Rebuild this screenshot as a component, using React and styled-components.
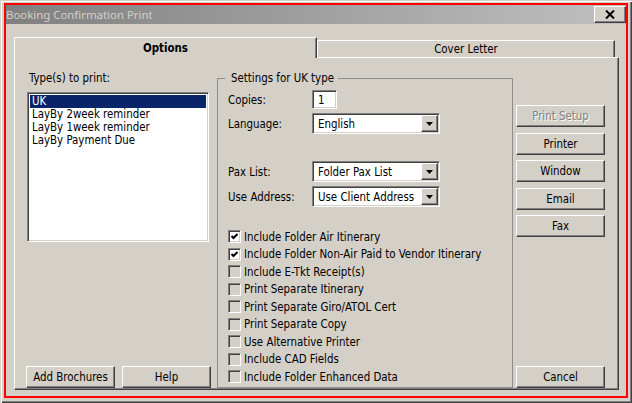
import React from 'react';
import styled, { createGlobalStyle } from 'styled-components';

const Global = createGlobalStyle`
  html, body { margin: 0; padding: 0; background: #d4d0c8; }
  body {
    font-family: "DejaVu Sans Condensed", "Liberation Sans", sans-serif;
    font-size: 11.4px;
    color: #000;
  }
  * { box-sizing: border-box; }
`;

const Window = styled.div`
  width: 632px;
  height: 403px;
  padding: 3px 4px 5px 4px;
  background: #d4d0c8;
  box-shadow: inset 1px 1px #d4d0c8, inset 2px 2px #fff, inset -1px -1px #404040, inset -2px -2px #808080;
`;

const Frame = styled.div`
  height: 100%;
  border: 2px solid #ff0000;
  display: flex;
  flex-direction: column;
`;

const TitleBar = styled.div`
  height: 19px;
  flex: none;
  display: flex;
  justify-content: space-between;
  align-items: flex-start;
  background: linear-gradient(to right, #808080, #c0c0c0);
`;

const Title = styled.span`
  font-family: "Noto Sans", "Liberation Sans", sans-serif;
  font-size: 11.4px;
  line-height: 19px;
  color: #d4d0c8;
`;

const RaisedButton = styled.button`
  font-family: inherit;
  font-size: 11.4px;
  padding: 0;
  margin: 0;
  background: #d4d0c8;
  color: ${p => (p.disabled ? '#808080' : '#000')};
  text-shadow: ${p => (p.disabled ? '1px 1px #fff' : 'none')};
  border-top: 1px solid #fff;
  border-left: 1px solid #fff;
  border-right: 1px solid #404040;
  border-bottom: 1px solid #404040;
  box-shadow: inset -1px -1px #808080;
  display: flex;
  align-items: center;
  justify-content: center;
`;

const CloseButton = styled(RaisedButton)`
  width: 32px;
  height: 17px;
  margin-top: 1px;
`;

const Body = styled.div`
  flex: 1;
  display: flex;
  flex-direction: column;
  padding: 13px 7px 6px 8px;
`;

const TabRow = styled.div`
  display: flex;
  align-items: flex-end;
  height: 20px;
  flex: none;
`;

const Tab = styled.div`
  position: relative;
  z-index: 1;
  width: ${p => (p.active ? '303px' : '298px')};
  height: ${p => (p.active ? '21px' : '17px')};
  margin-bottom: ${p => (p.active ? '-1px' : '0')};
  background: #d4d0c8;
  border-top: 1px solid #fff;
  border-left: 1px solid #fff;
  border-right: 1px solid #404040;
  box-shadow: inset -1px 0 #808080;
  font-weight: ${p => (p.active ? 'bold' : 'normal')};
  display: flex;
  justify-content: center;
  align-items: center;
`;

const Panel = styled.div`
  flex: 1;
  display: flex;
  padding: 14px 0 1px 11px;
  border-top: 1px solid #fff;
  border-left: 1px solid #fff;
  border-right: 1px solid #404040;
  border-bottom: 1px solid #404040;
  box-shadow: inset -1px -1px #808080;
`;

const LeftCol = styled.div`
  width: 185px;
  display: flex;
  flex-direction: column;
`;

const Caption = styled.div`
  line-height: 13px;
  padding-left: 3px;
`;

const sunken = `
  border-top: 1px solid #808080;
  border-left: 1px solid #808080;
  border-right: 1px solid #fff;
  border-bottom: 1px solid #fff;
  box-shadow: inset 1px 1px #404040, inset -1px -1px #d4d0c8;
`;

const ListBox = styled.div`
  ${sunken}
  width: 182px;
  height: 150px;
  margin: 7px 0 0 1px;
  background: #fff;
  padding: 2px;
`;

const ListItem = styled.div`
  height: 13px;
  line-height: 13px;
  padding-left: 2px;
  background: ${p => (p.selected ? '#0a246a' : 'transparent')};
  color: ${p => (p.selected ? '#fff' : '#000')};
  white-space: nowrap;
`;

const ButtonRow = styled.div`
  margin-top: auto;
  display: flex;
  gap: 7px;
`;

const DialogButton = styled(RaisedButton)`
  width: 89px;
  height: 22px;
  flex: none;
`;

const Group = styled.fieldset`
  width: 296px;
  margin: 0 0 0 6px;
  padding: 5px 0 0 10px;
  border: 1px solid #8c8c8c;
  min-width: 0;
`;

const Legend = styled.legend`
  margin-left: -3px;
  padding: 0 4px 0 6px;
  line-height: 13px;
`;

const FieldRow = styled.div`
  display: flex;
  align-items: center;
  margin-top: ${p => p.gap || 0}px;
`;

const FieldLabel = styled.div`
  width: 84px;
  flex: none;
`;

const TextBox = styled.div`
  ${sunken}
  width: 25px;
  height: 19px;
  background: #fff;
  padding-left: 5px;
  display: flex;
  align-items: center;
`;

const Combo = styled.div`
  ${sunken}
  width: 128px;
  height: 21px;
  background: #fff;
  display: flex;
  align-items: center;
  padding: 1px 1px 1px 5px;
`;

const ComboText = styled.span`
  flex: 1;
  white-space: nowrap;
`;

const ComboArrow = styled(RaisedButton)`
  width: 17px;
  height: 17px;
  flex: none;
`;

const CheckList = styled.div`
  margin-top: 21px;
  display: flex;
  flex-direction: column;
`;

const CheckRow = styled.div`
  height: 17.5px;
  display: flex;
  align-items: center;
  white-space: nowrap;
`;

const CheckBox = styled.span`
  ${sunken}
  width: 13px;
  height: 13px;
  flex: none;
  margin-right: 3px;
  background: ${p => (p.checked ? '#fff' : '#d4d0c8')};
  display: flex;
  align-items: center;
  justify-content: center;
`;

const RightCol = styled.div`
  width: 89px;
  margin-left: 3px;
  padding-top: 33px;
  display: flex;
  flex-direction: column;
  gap: 5.5px;
`;

const CancelSlot = styled.div`
  margin-top: auto;
`;

const Arrow = () => (
  <svg width="7" height="4" viewBox="0 0 7 4">
    <polygon points="0,0 7,0 3.5,4" fill="#000" />
  </svg>
);

const CloseIcon = () => (
  <svg width="10" height="9" viewBox="0 0 10 9">
    <path d="M1 0.5 L9 8.5 M9 0.5 L1 8.5" stroke="#000" strokeWidth="2" />
  </svg>
);

const CheckMark = () => (
  <svg width="9" height="9" viewBox="0 0 9 9">
    <polyline points="1.5,4 3.5,6 7.5,2" fill="none" stroke="#000" strokeWidth="2" />
  </svg>
);

const types = ['UK', 'LayBy 2week reminder', 'LayBy 1week reminder', 'LayBy Payment Due'];

const options = [
  ['Include Folder Air Itinerary', true],
  ['Include Folder Non-Air Paid to Vendor Itinerary', true],
  ['Include E-Tkt Receipt(s)', false],
  ['Print Separate Itinerary', false],
  ['Print Separate Giro/ATOL Cert', false],
  ['Print Separate Copy', false],
  ['Use Alternative Printer', false],
  ['Include CAD Fields', false],
  ['Include Folder Enhanced Data', false],
];

const Select = ({ value }) => (
  <Combo>
    <ComboText>{value}</ComboText>
    <ComboArrow as="span"><Arrow /></ComboArrow>
  </Combo>
);

export default function App() {
  return (
    <>
      <Global />
      <Window>
        <Frame>
          <TitleBar>
            <Title>Booking Confirmation Print</Title>
            <CloseButton><CloseIcon /></CloseButton>
          </TitleBar>
          <Body>
            <TabRow>
              <Tab active>Options</Tab>
              <Tab>Cover Letter</Tab>
            </TabRow>
            <Panel>
              <LeftCol>
                <Caption>Type(s) to print:</Caption>
                <ListBox>
                  {types.map((t, i) => (
                    <ListItem key={t} selected={i === 0}>{t}</ListItem>
                  ))}
                </ListBox>
                <ButtonRow>
                  <DialogButton>Add Brochures</DialogButton>
                  <DialogButton>Help</DialogButton>
                </ButtonRow>
              </LeftCol>
              <Group>
                <Legend>Settings for UK type</Legend>
                <FieldRow>
                  <FieldLabel>Copies:</FieldLabel>
                  <TextBox>1</TextBox>
                </FieldRow>
                <FieldRow gap={4}>
                  <FieldLabel>Language:</FieldLabel>
                  <Select value="English" />
                </FieldRow>
                <FieldRow gap={27}>
                  <FieldLabel>Pax List:</FieldLabel>
                  <Select value="Folder Pax List" />
                </FieldRow>
                <FieldRow gap={4}>
                  <FieldLabel>Use Address:</FieldLabel>
                  <Select value="Use Client Address" />
                </FieldRow>
                <CheckList>
                  {options.map(([label, checked]) => (
                    <CheckRow key={label}>
                      <CheckBox checked={checked}>{checked && <CheckMark />}</CheckBox>
                      {label}
                    </CheckRow>
                  ))}
                </CheckList>
              </Group>
              <RightCol>
                <DialogButton disabled>Print Setup</DialogButton>
                <DialogButton>Printer</DialogButton>
                <DialogButton>Window</DialogButton>
                <DialogButton>Email</DialogButton>
                <DialogButton>Fax</DialogButton>
                <CancelSlot>
                  <DialogButton>Cancel</DialogButton>
                </CancelSlot>
              </RightCol>
            </Panel>
          </Body>
        </Frame>
      </Window>
    </>
  );
}
